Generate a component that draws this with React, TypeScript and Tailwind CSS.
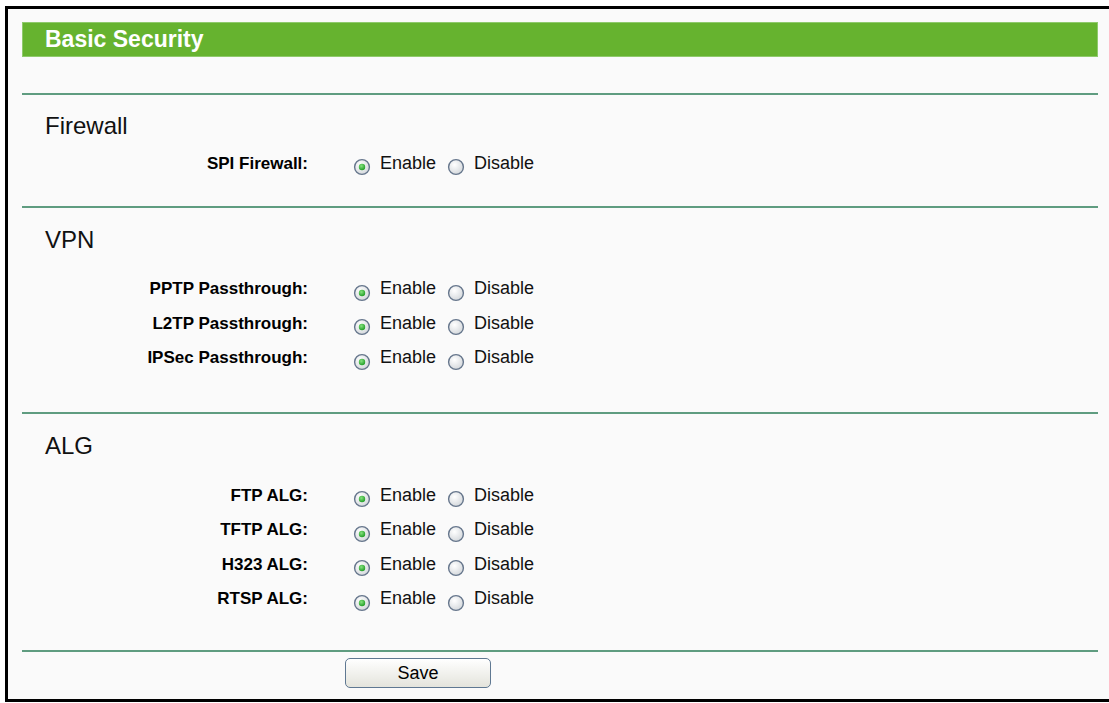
type Row = { label: string };

type SectionProps = {
  title: string;
  rows: Row[];
  headingMt: string;
  firstRowMt: string;
};

function Radio({ checked }: { checked?: boolean }) {
  return (
    <svg width="18" height="18" viewBox="0 0 18 18" className="mt-[8px] shrink-0">
      <defs>
        <radialGradient id="rf" cx="40%" cy="35%" r="70%">
          <stop offset="0%" stopColor="#ffffff" />
          <stop offset="100%" stopColor="#d2d6da" />
        </radialGradient>
        <radialGradient id="rd" cx="40%" cy="35%" r="70%">
          <stop offset="0%" stopColor="#86e27f" />
          <stop offset="100%" stopColor="#1c9a22" />
        </radialGradient>
      </defs>
      <circle cx="9" cy="9" r="7.4" fill="url(#rf)" stroke="#66768c" strokeWidth="1.4" />
      {checked && <circle cx="9" cy="9" r="3.2" fill="url(#rd)" />}
    </svg>
  );
}

function OptionRow({ label }: Row) {
  return (
    <div className="flex h-[34.5px] items-center">
      <div className="w-[286px] text-right text-[17px] font-bold text-black">{label}</div>
      <div className="ml-[45px] flex items-center text-[18px] text-[#111]">
        <Radio checked />
        <span className="ml-[9px]">Enable</span>
        <span className="ml-[11px] flex items-center">
          <Radio />
        </span>
        <span className="ml-[9px]">Disable</span>
      </div>
    </div>
  );
}

function Divider({ mt }: { mt: string }) {
  return <div className={`h-[2px] w-full bg-[#5f9c80] ${mt}`} />;
}

function Section({ title, rows, headingMt, firstRowMt }: SectionProps) {
  return (
    <div>
      <div className={`flex h-[40px] items-center pl-[23px] text-[24px] text-[#111] ${headingMt}`}>
        {title}
      </div>
      <div className={firstRowMt}>
        {rows.map((r) => (
          <OptionRow key={r.label} label={r.label} />
        ))}
      </div>
    </div>
  );
}

export default function App() {
  return (
    <div className="min-h-[703px] bg-white pl-[5px] pt-[6px] font-['Liberation_Sans',Arial,sans-serif]">
      <div className="h-[696px] w-[1104px] border-b-[3px] border-l-[3px] border-t-[3px] border-black bg-[#fafafa] pl-[14px] pt-[13px]">
        <div className="w-[1076px]">
          <div className="flex h-[35px] items-center border border-[#8fca6c] bg-[#66b32f] pl-[22px] text-[23px] font-bold text-white">
            Basic Security
          </div>

          <Divider mt="mt-[36px]" />
          <Section
            title="Firewall"
            rows={[{ label: "SPI Firewall:" }]}
            headingMt="mt-[11px]"
            firstRowMt="mt-0"
          />

          <Divider mt="mt-[25px]" />
          <Section
            title="VPN"
            rows={[
              { label: "PPTP Passthrough:" },
              { label: "L2TP Passthrough:" },
              { label: "IPSec Passthrough:" },
            ]}
            headingMt="mt-[12px]"
            firstRowMt="mt-[12px]"
          />

          <Divider mt="mt-[37px]" />
          <Section
            title="ALG"
            rows={[
              { label: "FTP ALG:" },
              { label: "TFTP ALG:" },
              { label: "H323 ALG:" },
              { label: "RTSP ALG:" },
            ]}
            headingMt="mt-[12px]"
            firstRowMt="mt-[12px]"
          />

          <Divider mt="mt-[34px]" />
          <div className="mt-[6px] pl-[323px]">
            <button className="h-[30px] w-[146px] rounded-[5px] border border-[#5f7892] bg-gradient-to-b from-white to-[#e4e4dc] text-[18px] text-black">
              Save
            </button>
          </div>
        </div>
      </div>
    </div>
  );
}
